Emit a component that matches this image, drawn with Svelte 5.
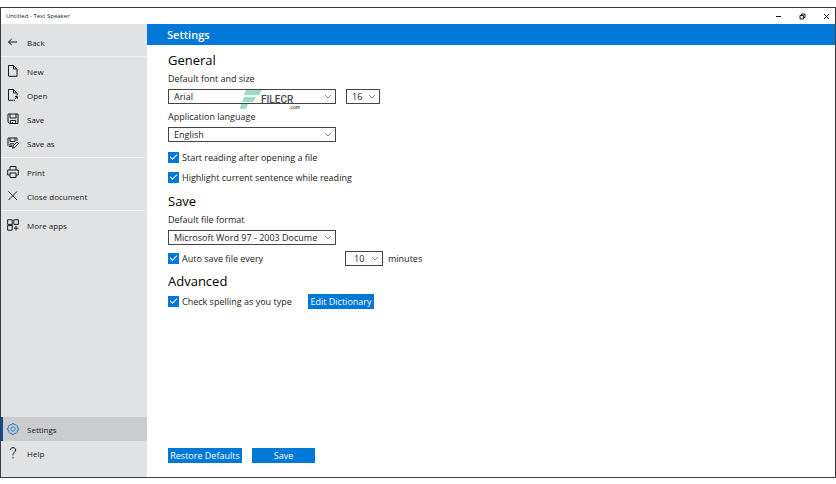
<script lang="ts">
  type Item = { id: string; label: string };

  const groups: Item[][] = [
    [{ id: 'back', label: 'Back' }],
    [
      { id: 'new', label: 'New' },
      { id: 'open', label: 'Open' },
      { id: 'save', label: 'Save' },
      { id: 'saveas', label: 'Save as' },
    ],
    [
      { id: 'print', label: 'Print' },
      { id: 'close', label: 'Close document' },
    ],
    [{ id: 'apps', label: 'More apps' }],
  ];
  const bottom: Item[] = [
    { id: 'settings', label: 'Settings' },
    { id: 'help', label: 'Help' },
  ];

  let current = $state('settings');
  let font = $state('Arial');
  let size = $state('16');
  let language = $state('English');
  let format = $state('Microsoft Word 97 - 2003 Docume');
  let interval = $state('10');
  let readOnOpen = $state(true);
  let highlight = $state(true);
  let autoSave = $state(true);
  let spelling = $state(true);
</script>

{#snippet icon(id: string)}
  <svg class="icon" viewBox="0 0 12 12" aria-hidden="true">
    {#if id === 'back'}
      <path d="M10 6H1.500M4.700 3L1.500 6L4.700 9" />
    {:else if id === 'new'}
      <path d="M1.500 .5H6.500L10 4V11.300H1.500ZM6.500 .5V4H10" />
    {:else if id === 'open'}
      <path d="M6 11.300H1.500V.5H6.500L10 4V6.500M6.500 .5V4H10M6.500 11.300H8M8 7.500H10.300V9.800M10.300 7.500L7.500 10.300" />
    {:else if id === 'save'}
      <path d="M1 1H11V10.500H2.500L1 9ZM3 1V5H9V1M3.300 10.500V7.500H8.700V10.500M5.300 9V10.500" />
    {:else if id === 'saveas'}
      <path d="M5 9.500H2L1 8.500V1H10V4M3 1V4.500H8V1M3 9.500V6.800H7M5.500 11.300L6.200 8.700L10 5L11.500 6.500L7.800 10.500ZM4.700 8V9.500" />
    {:else if id === 'print'}
      <path d="M3 4V.5H9V4M3 9H.7V4H11.300V9H9M3 7H9V11.500H3Z" />
    {:else if id === 'close'}
      <path d="M1.500 1.500L10 10M10 1.500L1.500 10" />
    {:else if id === 'apps'}
      <path d="M.6 .8H5.200V5.400H.6ZM6.800 .8H11.400V5.400H6.800ZM.6 6.600H5.200V11.200H.6ZM5.200 5.400V6.600M9 6.800V11.500M6.700 9.200H11.400" />
    {:else if id === 'settings'}
      <path
        d="M5 .7H7L7.500 2L9 1.500L10.500 3L10 4.500L11.400 5V7L10 7.500L10.500 9L9 10.500L7.500 10L7 11.400H5L4.500 10L3 10.500L1.500 9L2 7.500L.6 7V5L2 4.500L1.500 3L3 1.500L4.500 2Z"
      />
      <circle cx="6" cy="6" r="2.200" />
    {:else}
      <path d="M3.300 3.200C3.300 1.500 4.500 .6 6 .6C7.600 .6 8.700 1.600 8.700 3C8.700 5 6 5.400 6 7.500V8.300M6 10.200V11.400" />
    {/if}
  </svg>
{/snippet}

{#snippet item(e: Item)}
  <button class="item" class:active={current === e.id} onclick={() => (current = e.id)}>
    {@render icon(e.id)}
    <span>{e.label}</span>
  </button>
{/snippet}

{#snippet chevron()}
  <svg class="chevron" viewBox="0 0 8 5" aria-hidden="true"><path d="M1 1L4 4L7 1" /></svg>
{/snippet}

<div class="window">
  <header class="titlebar">
    <span>Untitled - Text Speaker</span>
    <div class="controls">
      <button aria-label="Minimize"><svg viewBox="0 0 7 7"><path d="M1 3.500H6" /></svg></button>
      <button aria-label="Restore"><svg viewBox="0 0 7 7"><path d="M1 2.500H4.500V6H1ZM2.500 2.500V1H6V4.500H4.500" /></svg></button>
      <button aria-label="Close"><svg viewBox="0 0 7 7"><path d="M1 1L6 6M6 1L1 6" /></svg></button>
    </div>
  </header>

  <div class="body">
    <nav>
      {#each groups as group, i}
        {#if i > 0}<hr />{/if}
        {#each group as e (e.id)}
          {@render item(e)}
        {/each}
      {/each}
      <div class="spacer"></div>
      {#each bottom as e (e.id)}
        {@render item(e)}
      {/each}
    </nav>

    <main>
      <h1>Settings</h1>
      <div class="content">
        <section>
          <h2>General</h2>
          <label class="caption" for="font">Default font and size</label>
          <div class="fields">
            <div class="select wide">
              <select id="font" bind:value={font}><option>Arial</option></select>
              {@render chevron()}
              <div class="mark">
                <svg viewBox="0 0 22 20" aria-hidden="true">
                  <path d="M6 0H22L19 5H4ZM4 7H16L13 12H2ZM1 14H8L6 19H0Z" />
                </svg>
                <span>FILECR</span>
                <small>.com</small>
              </div>
            </div>
            <div class="select size">
              <select aria-label="Font size" bind:value={size}><option>16</option></select>
              {@render chevron()}
            </div>
          </div>
          <label class="caption second" for="language">Application language</label>
          <div class="select wide">
            <select id="language" bind:value={language}><option>English</option></select>
            {@render chevron()}
          </div>
          <div class="checks">
            <label class="check"><input type="checkbox" bind:checked={readOnOpen} />Start reading after opening a file</label>
            <label class="check"><input type="checkbox" bind:checked={highlight} />Highlight current sentence while reading</label>
          </div>
        </section>

        <section>
          <h2>Save</h2>
          <label class="caption" for="format">Default file format</label>
          <div class="select wide">
            <select id="format" bind:value={format}><option>Microsoft Word 97 - 2003 Docume</option></select>
            {@render chevron()}
          </div>
          <div class="row">
            <label class="check auto"><input type="checkbox" bind:checked={autoSave} />Auto save file every</label>
            <div class="select minutes">
              <select id="interval" aria-label="Auto save interval" bind:value={interval}><option>10</option></select>
              {@render chevron()}
            </div>
            <label for="interval">minutes</label>
          </div>
        </section>

        <section>
          <h2>Advanced</h2>
          <div class="line">
            <label class="check spell"><input type="checkbox" bind:checked={spelling} />Check spelling as you type</label>
            <button class="primary dict">Edit Dictionary</button>
          </div>
        </section>

        <footer>
          <button class="primary restore">Restore Defaults</button>
          <button class="primary ok">Save</button>
        </footer>
      </div>
    </main>
  </div>
</div>

<style>
  :global(body) {
    background: #fff;
  }
  .window {
    --blue: #0078d7;
    box-sizing: border-box;
    display: flex;
    flex-direction: column;
    min-height: calc(100vh - 13px);
    margin: 7px 0 6px;
    border: 1px solid #3c3c40;
    font-family: "Open Sans", "Noto Sans", sans-serif;
    font-size: 9px;
    color: #1a1a1a;
    background: #fff;
  }
  button, select {
    font: inherit;
    color: inherit;
    border: 0;
    padding: 0;
    background: none;
  }
  svg {
    fill: none;
    stroke: currentColor;
  }

  .titlebar {
    display: flex;
    align-items: center;
    justify-content: space-between;
    height: 16px;
    padding-left: 5px;
    font-size: 6px;
  }
  .controls {
    display: flex;
    gap: 6px;
  }
  .controls button {
    width: 18px;
    height: 16px;
    display: grid;
    place-items: center;
  }
  .controls svg {
    width: 7px;
    height: 7px;
  }

  .body {
    flex: 1;
    display: flex;
  }
  nav {
    flex: 0 0 146px;
    box-sizing: border-box;
    display: flex;
    flex-direction: column;
    padding: 6px 0 12px;
    font-size: 8px;
    background: #e1e2e4;
  }
  .item {
    display: flex;
    align-items: center;
    gap: 8px;
    height: 24px;
    padding-left: 6px;
    text-align: left;
  }
  .item.active {
    padding-left: 4px;
    border-left: 2px solid #0050a8;
    background: #cbccce;
  }
  .item.active .icon {
    color: #2b83c6;
  }
  .icon {
    width: 12px;
    height: 12px;
  }
  hr {
    width: 100%;
    height: 1px;
    margin: 2px 0;
    border: 0;
    background: #f2f2f3;
  }
  .spacer {
    flex: 1;
  }

  main {
    flex: 1;
    display: flex;
    flex-direction: column;
    min-width: 0;
  }
  h1 {
    margin: 0;
    padding-left: 20px;
    font-size: 11px;
    font-weight: 600;
    line-height: 21px;
    color: #fff;
    background: var(--blue);
  }
  .content {
    flex: 1;
    display: flex;
    flex-direction: column;
    padding: 5px 21px 14px;
  }
  h2 {
    margin: 0;
    font-size: 13px;
    font-weight: 400;
    line-height: 20px;
    color: #000;
  }
  section {
    margin-bottom: 4px;
  }
  .caption {
    display: block;
    margin-bottom: 1px;
    line-height: 18px;
  }
  .second {
    margin-top: 4px;
  }
  .fields, .row, .line, footer {
    display: flex;
    align-items: center;
  }
  .fields {
    gap: 10px;
  }
  .select {
    position: relative;
    height: 15px;
  }
  .select select {
    appearance: none;
    box-sizing: border-box;
    display: block;
    width: 100%;
    height: 15px;
    padding-left: 5px;
    border: 1px solid #444;
    border-radius: 0;
    line-height: 13px;
    background: #fff;
  }
  .wide {
    width: 168px;
  }
  .size {
    width: 34px;
  }
  .minutes {
    width: 38px;
    margin-right: 5px;
  }
  .minutes select {
    padding-left: 8px;
  }
  .chevron {
    position: absolute;
    top: 5px;
    right: 4px;
    width: 8px;
    height: 5px;
    color: #8a8a8a;
    pointer-events: none;
  }
  .mark {
    position: absolute;
    top: 1px;
    left: 72px;
    display: flex;
    align-items: center;
    pointer-events: none;
  }
  .mark svg {
    width: 22px;
    height: 20px;
    fill: #9bdcc4;
    stroke: none;
  }
  .mark span {
    margin-left: -1px;
    font: 500 10px/12px "Roboto", sans-serif;
    color: #4a4a4a;
  }
  .mark small {
    align-self: flex-end;
    margin-left: -4px;
    font: italic 500 5px/6px "Roboto", sans-serif;
    color: #4a4a4a;
  }

  .checks {
    margin-top: 5px;
  }
  .check {
    display: flex;
    align-items: center;
    gap: 3px;
    height: 20px;
  }
  .check input {
    appearance: none;
    display: grid;
    place-items: center;
    width: 11px;
    height: 11px;
    margin: 0;
    border: 1px solid var(--blue);
    box-sizing: border-box;
  }
  .check input:checked {
    background: var(--blue);
  }
  .check input:checked::before {
    content: "";
    width: 6px;
    height: 3px;
    margin-bottom: 2px;
    border: solid #fff;
    border-width: 0 0 1px 1px;
    transform: rotate(-45deg);
  }
  .row {
    height: 18px;
    margin-top: 4px;
  }
  .auto {
    width: 177px;
  }
  .spell {
    width: 140px;
  }

  .primary {
    height: 15px;
    line-height: 15px;
    color: #fff;
    background: var(--blue);
  }
  .dict {
    width: 66px;
  }
  .restore {
    width: 74px;
  }
  .ok {
    width: 63px;
  }
  footer {
    gap: 10px;
    margin-top: auto;
  }
</style>
